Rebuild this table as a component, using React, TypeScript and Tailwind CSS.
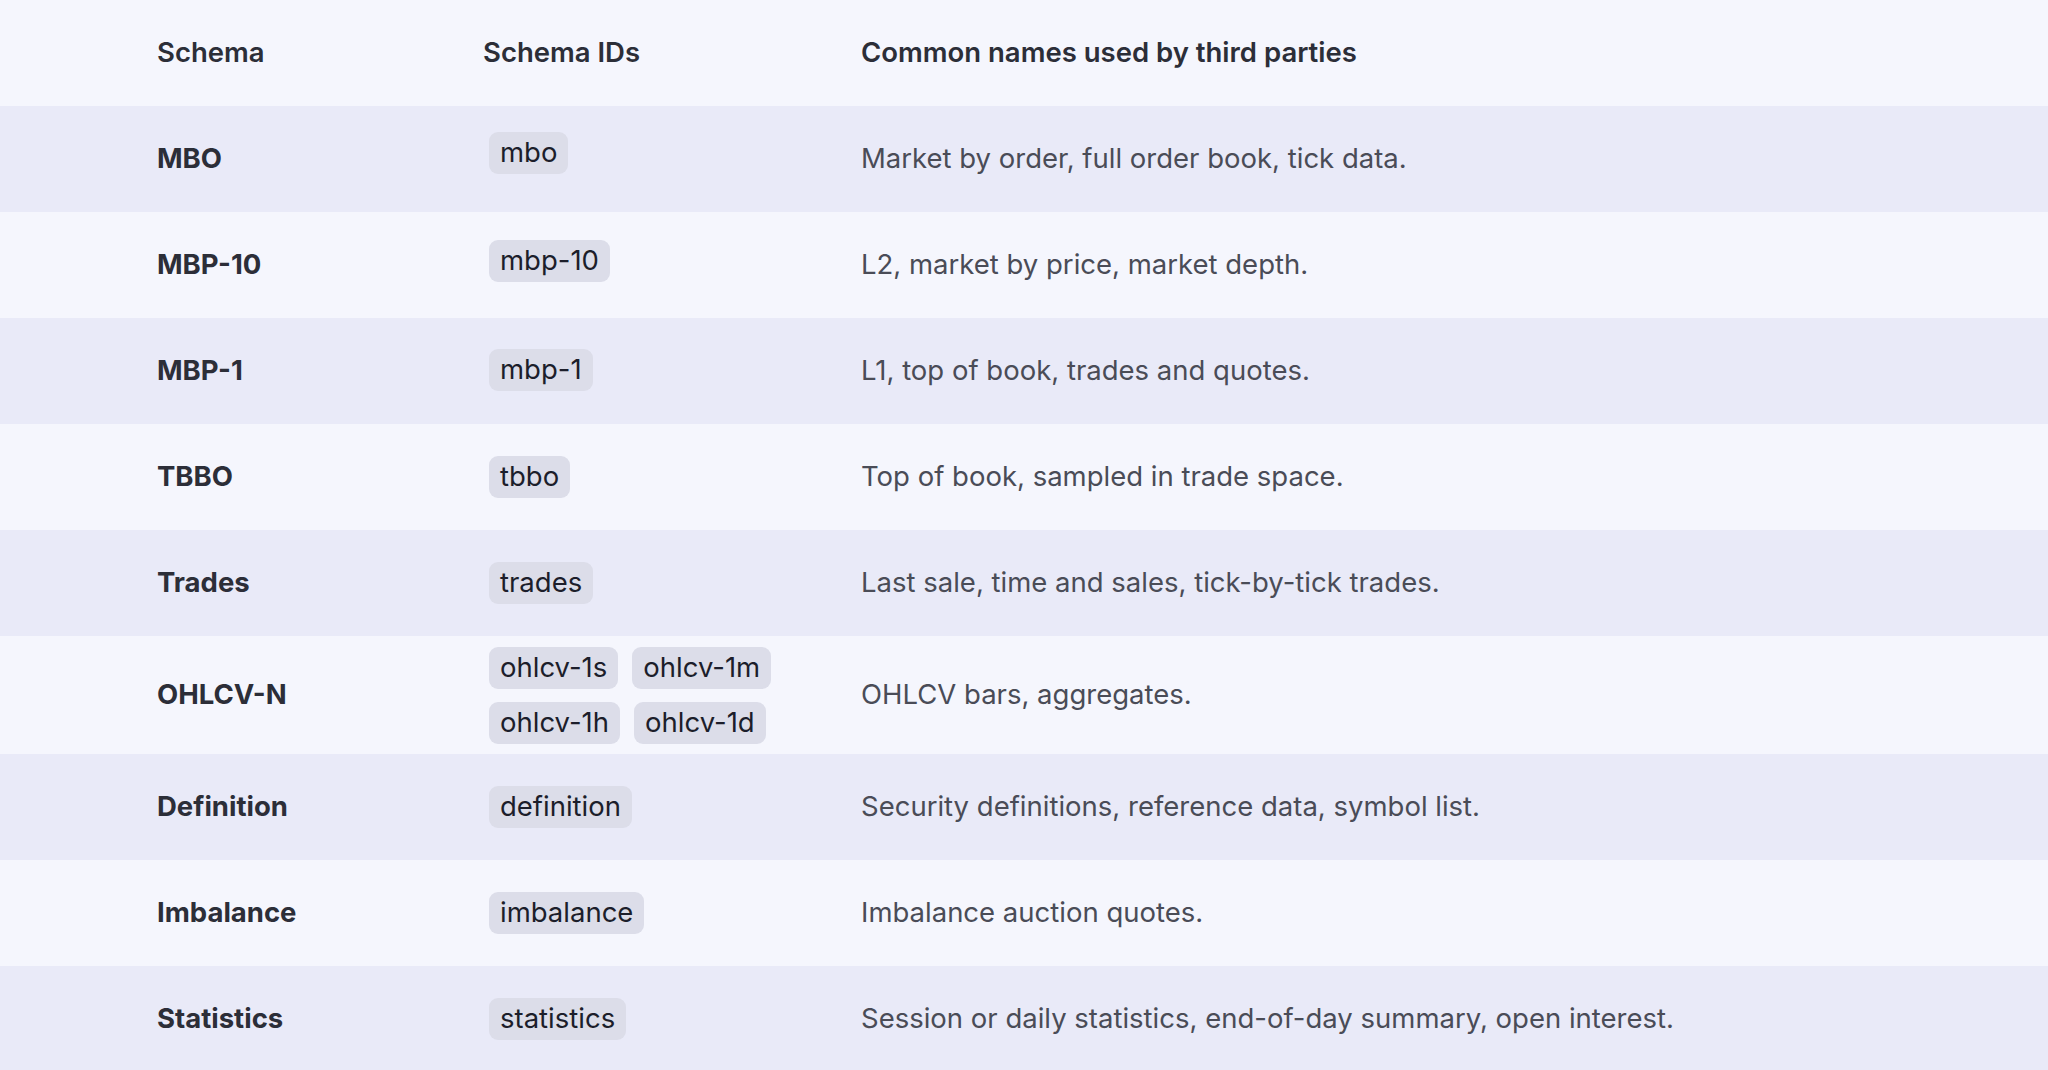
import React from "react";

type Row = { name: string; ids: string[][]; desc: string; tall?: boolean; lift?: string };

const rows: Row[] = [
  { name: "MBO", ids: [["mbo"]], desc: "Market by order, full order book, tick data.", lift: "mb-[12px]" },
  { name: "MBP-10", ids: [["mbp-10"]], desc: "L2, market by price, market depth.", lift: "mb-[8px]" },
  { name: "MBP-1", ids: [["mbp-1"]], desc: "L1, top of book, trades and quotes.", lift: "mb-[3px]" },
  { name: "TBBO", ids: [["tbbo"]], desc: "Top of book, sampled in trade space." },
  { name: "Trades", ids: [["trades"]], desc: "Last sale, time and sales, tick-by-tick trades." },
  {
    name: "OHLCV-N",
    ids: [
      ["ohlcv-1s", "ohlcv-1m"],
      ["ohlcv-1h", "ohlcv-1d"],
    ],
    desc: "OHLCV bars, aggregates.",
    tall: true,
  },
  { name: "Definition", ids: [["definition"]], desc: "Security definitions, reference data, symbol list." },
  { name: "Imbalance", ids: [["imbalance"]], desc: "Imbalance auction quotes." },
  { name: "Statistics", ids: [["statistics"]], desc: "Session or daily statistics, end-of-day summary, open interest." },
];

function Chip({ label }: { label: string }) {
  return (
    <span className="inline-flex h-[42px] items-center rounded-[9px] bg-[#dcdde9] px-[11px] text-[27.5px] leading-none text-[#1c1e2b]">
      {label}
    </span>
  );
}

export default function App() {
  return (
    <div
      className="w-[2048px] h-[1070px] overflow-hidden bg-[#f5f6fd]"
      style={{ fontFamily: "Inter, 'Noto Sans', sans-serif" }}
    >
      <div className="grid h-[106px] grid-cols-[157px_326px_378px_1fr] items-center bg-[#f5f6fd] text-[27.5px] font-semibold text-[#2c2e38]">
        <div />
        <div>Schema</div>
        <div>Schema IDs</div>
        <div>Common names used by third parties</div>
      </div>
      {rows.map((r, i) => (
        <div
          key={r.name}
          className={`grid grid-cols-[157px_332px_372px_1fr] items-center ${
            r.tall ? "h-[118px]" : "h-[106px]"
          } ${i % 2 === 0 ? "bg-[#e9eaf8]" : "bg-[#f5f6fd]"}`}
        >
          <div />
          <div className="text-[27.5px] font-bold text-[#2c2e38]">{r.name}</div>
          <div className={`flex flex-col gap-[13px] ${r.lift ?? ""}`}>
            {r.ids.map((line, j) => (
              <div key={j} className="flex gap-[14px]">
                {line.map((id) => (
                  <Chip key={id} label={id} />
                ))}
              </div>
            ))}
          </div>
          <div className="text-[27.5px] text-[#4a4c57]">{r.desc}</div>
        </div>
      ))}
    </div>
  );
}
